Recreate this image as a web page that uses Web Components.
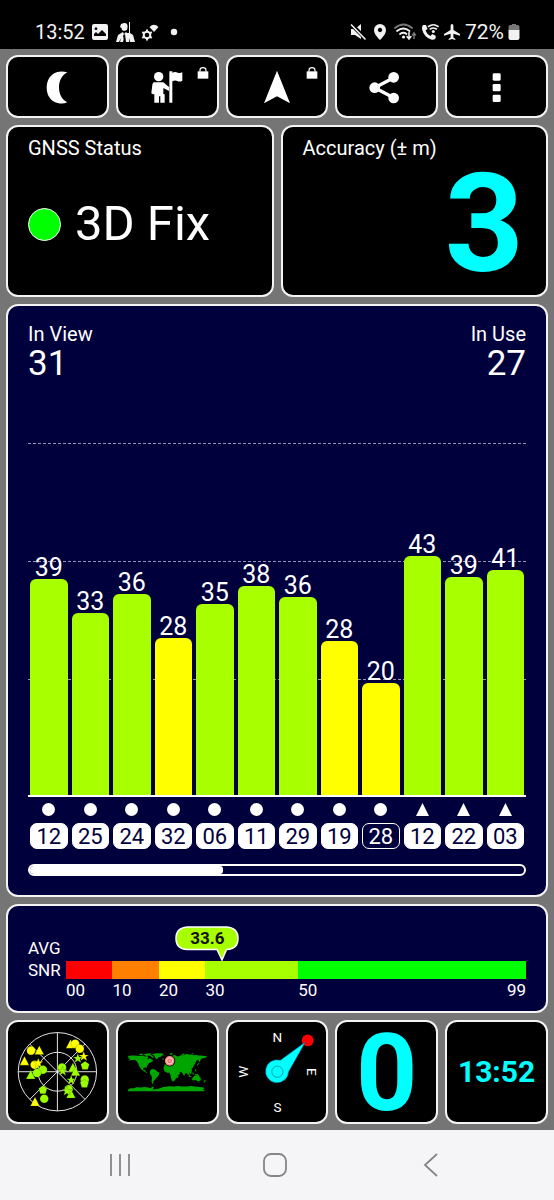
<!DOCTYPE html>
<html lang="en">
<head>
<meta charset="utf-8">
<meta name="viewport" content="width=device-width, initial-scale=1">
<title>GNSS Status</title>
<style>
  body { margin: 0; font-family: Roboto, "Liberation Sans", sans-serif; color: #fff; background: #757575; }
</style>
</head>
<body>
<gnss-app></gnss-app>

<script>
function define(name, html, setup) {
  const template = document.createElement('template');
  template.innerHTML = html;
  customElements.define(name, class extends HTMLElement {
    constructor() {
      super();
      this.attachShadow({ mode: 'open' }).append(template.content.cloneNode(true));
    }
    connectedCallback() {
      if (setup) setup(this, this.shadowRoot);
    }
  });
}

/* System status bar */
define('status-bar', `
<style>
  :host { display: flex; justify-content: space-between; align-items: center; box-sizing: border-box;
    height: 49px; padding: 14px 34px 0 35px; background: #000; color: #f2f2f2; font-size: 20px; line-height: 24px; }
  div { display: flex; align-items: center; }
  svg { display: block; fill: #f2f2f2; }
  .left { gap: 6px; }
  .right { gap: 4px; font-size: 21px; }
</style>
<div class="left">
  <span>13:52</span>
  <svg width="18" height="18" viewBox="0 0 18 18"><path fill-rule="evenodd" d="M3 1h12a2 2 0 0 1 2 2v12a2 2 0 0 1-2 2H3a2 2 0 0 1-2-2V3a2 2 0 0 1 2-2zm0 12h12v-2l-4-4-4 4-2-2-2 2zM5 4.300a1.400 1.400 0 1 0 .01 0z"/></svg>
  <svg width="20" height="20" viewBox="0 0 20 20"><path d="M9 1c3 0 4 2 3.500 4.500L12 8l-3 1-2-1-.5-2L5 5l1-3zM14 0h1v11h-1zM1 20l2-7 5-3 1 2 2-2 1 1h3l3 2 2 7h-5l-1-4v4h-3l-1-8-2 8H5l1-4-2 4z"/><path fill="#000" d="M9 12l1 1-1 5-1-4z"/></svg>
  <svg width="18" height="18" viewBox="0 0 18 18"><path d="M8.500 4Q13-.5 17.500 4L13 9z"/><circle cx="6" cy="12" r="3.300" fill="none" stroke="#f2f2f2" stroke-width="2"/><path fill="none" stroke="#f2f2f2" stroke-width="2" d="M6 6.500v2M6 15.500v2M1.200 9.200l1.800 1M9 13.800l1.800 1M1.200 14.800l1.800-1M9 10.200l1.800-1"/></svg>
  <svg width="16" height="16" viewBox="0 0 16 16"><circle cx="9" cy="8" r="3.200"/></svg>
</div>
<div class="right">
  <svg width="18" height="18" viewBox="0 0 18 18"><path d="M2 6h4l6-5v15l-6-4H2z"/><path stroke="#000" stroke-width="4" d="M2 1l15 15"/><path stroke="#f2f2f2" stroke-width="1.600" d="M2 1.500l14.500 15"/></svg>
  <svg width="18" height="18" viewBox="0 0 18 18"><path fill-rule="evenodd" d="M9 1a6 6 0 0 1 6 6c0 4-4 8-6 10-2-2-6-6-6-10a6 6 0 0 1 6-6zm0 3.800a2.200 2.200 0 1 0 .01 0z"/></svg>
  <svg width="24" height="18" viewBox="0 0 24 18"><g fill="none" stroke-width="1.800" stroke-linecap="round"><path stroke="#777" d="M2 5q8.500-7 17 0"/><path stroke="#f2f2f2" d="M4 8q6.500-5 12.500 0M7 11q3.500-2.500 6.500 0"/><path stroke="#f2f2f2" stroke-width="1.500" d="M16 9.500v6M14 13.500l2 2.500 2-2.500"/><path stroke="#777" stroke-width="1.500" d="M21 15.500v-5M19.500 12l1.500-2 1.500 2"/></g><circle cx="10.500" cy="14" r="1.600"/></svg>
  <svg width="18" height="18" viewBox="0 0 18 18"><path d="M2 2l3 0 1.500 4-2 1.500q1.500 4 5 5.500l1.700-2 3.500 1.700v2.500q-1.500 2-4 1.600Q3 14.500 1 6q-.2-2.700 1-4z"/><path fill="none" stroke="#f2f2f2" stroke-width="1.600" stroke-linecap="round" d="M7.500 3.500q5-3.500 9.500 0M9.300 6q3-2 6 0"/><circle cx="12.300" cy="8.500" r="1.500"/></svg>
  <svg width="18" height="18" viewBox="0 0 18 18"><path d="M9 1q1.400 0 1.400 2v4l6.600 4v1.800l-6.600-2v3.700l2 1.500V17L9 16l-3.400 1v-1l2-1.500v-3.700l-6.600 2V11l6.600-4V3Q7.600 1 9 1z"/></svg>
  <span>72%</span>
  <svg width="12" height="18" viewBox="0 0 12 18"><path fill="#777" d="M4 1h4v1h2a2 2 0 0 1 1.500 2v3H.5V4A2 2 0 0 1 2 2h2z"/><path d="M.5 7h11v8a2 2 0 0 1-2 2h-7a2 2 0 0 1-2-2z"/></svg>
</div>`);

/* Toolbar button; the "locked" attribute adds the padlock badge */
define('tool-button', `
<style>
  :host { display: block; position: relative; }
  button { display: flex; align-items: center; justify-content: center; width: 100%; height: 63px; margin: 0; padding: 0;
    border: 2px solid #f4f4f4; border-radius: 12px; background: #000; color: #fff; }
  .lock { display: none; position: absolute; top: 12px; right: 10px; fill: #fff; }
  :host([locked]) .lock { display: block; }
  ::slotted(svg) { display: block; fill: #fff; }
</style>
<button type="button"><slot></slot></button>
<svg class="lock" width="12" height="12" viewBox="0 0 36 36"><path d="M2 13h32v22H2z"/><path fill="none" stroke="#fff" stroke-width="3.500" d="M9 14V9q0-7 9-7t9 7v5"/></svg>`,
(host, root) => root.querySelector('button').setAttribute('aria-label', host.getAttribute('label')));

/* Bordered panel */
define('panel-card', `
<style>
  :host { display: block; box-sizing: border-box; min-width: 0; border: 2px solid #f4f4f4; border-radius: 12px;
    background: var(--panel, #000); }
</style>
<slot></slot>`);

/* One signal bar with its value above */
define('sat-bar', `
<style>
  :host { display: flex; flex-direction: column; justify-content: flex-end; align-items: stretch; }
  span { font-size: 25px; line-height: 22px; text-align: center; }
  div { flex: none; border-radius: 6px 6px 0 0; background: #a8ff00; }
  :host([weak]) div { background: #ff0; }
</style>
<span><slot></slot></span><div></div>`,
(host, root) => root.querySelector('div').style.height = host.getAttribute('level') + '%');

/* Constellation symbol and satellite number */
define('sat-tag', `
<style>
  :host { display: flex; flex-direction: column; align-items: center; gap: 7px; }
  svg { display: block; fill: #fff; }
  polygon { display: none; }
  :host([glonass]) polygon { display: block; }
  :host([glonass]) circle { display: none; }
  span { box-sizing: border-box; width: 100%; height: 26px; border: 1px solid #fff; border-radius: 7px; background: #fff;
    color: #00003c; font-size: 22px; line-height: 26px; text-align: center; }
  :host([unused]) span { background: #00003c; color: #fff; }
</style>
<svg width="13" height="13" viewBox="0 0 13 13"><circle cx="6.500" cy="6.500" r="6.500"/><polygon points="6.500,0 13,13 0,13"/></svg>
<span><slot></slot></span>`);

define('signal-chart', `
<style>
  :host { display: flex; flex-direction: column; flex: 1; box-sizing: border-box; padding: 16px 20px 19px; }
  .counts { display: flex; justify-content: space-between; font-size: 20px; line-height: 24px; }
  .counts b { display: block; font-weight: 400; font-size: 35px; line-height: 36px; }
  .counts > :last-child { text-align: right; }
  .plot { position: relative; flex: 1; display: grid; min-height: 200px; margin-top: 61px; }
  .lines { position: absolute; inset: 0; display: grid; grid-template-rows: repeat(3, 1fr); }
  .lines i { border-top: 1px dashed #9494b0; }
  .bars, .tags { display: grid; grid-template-columns: repeat(12, 1fr); gap: 4px; padding: 0 2px; }
  .bars { position: relative; border-bottom: 2px solid #fff; margin: 0; }
  .tags { margin-top: 6px; }
  .scroll { box-sizing: border-box; height: 12px; margin-top: 15px; border: 2px solid #fff; border-radius: 6px; overflow: hidden; }
  .scroll div { width: 39%; height: 100%; border-radius: 0 3px 3px 0; background: #fff; }
</style>
<div class="counts"><div>In View<b>31</b></div><div>In Use<b>27</b></div></div>
<div class="plot">
  <div class="lines"><i></i><i></i><i></i></div>
  <div class="bars">
    <sat-bar level="61.5">39</sat-bar><sat-bar level="51.7">33</sat-bar><sat-bar level="57">36</sat-bar>
    <sat-bar level="44.7" weak>28</sat-bar><sat-bar level="54.4">35</sat-bar><sat-bar level="59.3">38</sat-bar>
    <sat-bar level="56.3">36</sat-bar><sat-bar level="43.7" weak>28</sat-bar><sat-bar level="31.8" weak>20</sat-bar>
    <sat-bar level="68">43</sat-bar><sat-bar level="61.9">39</sat-bar><sat-bar level="63.8">41</sat-bar>
  </div>
</div>
<div class="tags">
  <sat-tag>12</sat-tag><sat-tag>25</sat-tag><sat-tag>24</sat-tag><sat-tag>32</sat-tag><sat-tag>06</sat-tag><sat-tag>11</sat-tag>
  <sat-tag>29</sat-tag><sat-tag>19</sat-tag><sat-tag unused>28</sat-tag><sat-tag glonass>12</sat-tag><sat-tag glonass>22</sat-tag><sat-tag glonass>03</sat-tag>
</div>
<div class="scroll" aria-hidden="true"><div></div></div>`);

define('snr-meter', `
<style>
  :host { display: grid; grid-template-columns: 38px 1fr; padding: 20px 20px 10px; font-size: 17px; line-height: 22px; }
  .name { align-self: end; margin-bottom: 20px; }
  .scale { position: relative; padding-top: 35px; }
  .colors, .ticks { display: grid; grid-template-columns: 10fr 10fr 10fr 20fr 49fr; }
  .colors { height: 18px; }
  .colors i:nth-child(1) { background: #f00; }
  .colors i:nth-child(2) { background: #ff8000; }
  .colors i:nth-child(3) { background: #ff0; }
  .colors i:nth-child(4) { background: #a8ff00; }
  .colors i:nth-child(5) { background: #0f0; }
  .ticks > :last-child { display: flex; justify-content: space-between; }
  .marker { position: absolute; top: 0; left: 34%; width: 64px; height: 36px; margin-left: -47px; }
  .marker svg { position: absolute; inset: 0; }
  .marker b { position: relative; display: block; line-height: 24px; text-align: center; color: #111; font-size: 17px; }
</style>
<div class="name">AVG<br>SNR</div>
<div class="scale">
  <div class="colors"><i></i><i></i><i></i><i></i><i></i></div>
  <div class="ticks"><span>00</span><span>10</span><span>20</span><span>30</span><span><span>50</span><span>99</span></span></div>
  <div class="marker">
    <svg width="64" height="36" viewBox="0 0 64 36"><path fill="#a8ff00" stroke="#fff" stroke-width="1.500" d="M12 1h40q11 1 11 11.500t-11 11h-.5l-4.500 10.500-5-10.500H12Q1 23 1 12.500T12 1z"/></svg>
    <b>33.6</b>
  </div>
</div>`);

/* Polar view of the satellites */
define('sky-plot', `
<style>
  :host { display: block; }
  svg { display: block; width: 100%; }
</style>
<svg viewBox="24 36 300 302" role="img" aria-label="Sky view">
  <defs>
    <circle id="c" r="13"/><path id="t" d="M0-15l14 27h-28z"/><path id="p" d="M0-13l13 9-5 16H-8l-5-16z"/>
    <path id="s" d="M0-15l4 11h11l-9 6 4 12-10-7-10 7 4-12-9-6h11z"/>
  </defs>
  <g fill="none" stroke="#e8e8e8" stroke-width="3"><circle cx="174" cy="187" r="119"/><circle cx="174" cy="187" r="59"/>
    <path d="M174 68v238M55 187h238M90 103l168 168M90 271l168-168"/></g>
  <g id="sats" stroke="#000" stroke-opacity=".35" stroke-width="1.500"></g>
</svg>`,
(host, root) => {
  const sats = [
    't 74 155', 'c 94 123', 't 119 123', 't 214 104', 'c 228 102', 'c 242 117', 's 254 140', 'c 105 166', 's 116 160', 't 106 279',
    'c 130 181 g', 'c 112 191 g', 't 93 197 g', 'p 130 242 g', 'c 134 269 g', 'c 188 174 g', 's 190 185 g', 's 236 146 g',
    'p 258 168 g', 't 221 175 g', 't 229 187 g', 's 216 212 g', 'c 257 211 g', 'p 256 223 g', 't 215 255 g', 'c 208 240 g', 's 203 245 g'
  ];
  const layer = root.getElementById('sats');
  layer.innerHTML = sats.map(s => {
    const [shape, x, y, green] = s.split(' ');
    return `<use href="#${shape}" x="${x}" y="${y}" fill="${green ? '#9cff00' : '#ff0'}"/>`;
  }).join('');
});

define('world-map', `
<style>
  :host { display: block; }
  svg { display: block; width: 100%; }
</style>
<svg viewBox="353 36 300 302" role="img" aria-label="World map">
  <g fill="#00a500">
    <path d="M383 140l10-2 12 0 12 1 12-1 6 3 7-1 4 3-4 4 2 3 6-5 5 4 5 5-7 4-6 3-3 5-4 6 0 4-5-2-6 2 1 5 5 1 3 5 5 2-4 1-8-5-7-5-6-9-4-9-4-7-8-4-10 1-8 2 6-5-5-3z"/>
    <path d="M430 135l10-3 14-1-3 4 8 5 4 5-6-1-8-6-10 1z"/>
    <path d="M456 134l12-3 16 0 9 2-5 4-4 4-8 3-5 5-5-3-2-7-5-3z"/>
    <path d="M452 181l7-2 8 2 5 5 7 4-2 7-4 5-4 5-5 5-3 4-1 7-4 0-1-8 1-9-1-6-5-7 0-7z"/>
    <path d="M487 148l5-1 1 3-5 1zM497 151l3 0 2 7-4 1z"/>
    <path d="M494 167l2-5 5-2 5-4 5-2 2-5-1-5 5-5 6-3 6 2 4 3 6-1 4-3 8 0 9-4 8 2 8 0 7 2 8-1 7 2 8 0 8 1 7 0 0 3-7 3-5 1-5 4-2 7-3 0-2-6-6 2-2 5-2 5-4 6-3 6-4 3 2 6-4 5-5 1 1 6 3 7-4-3-4-9-4-1-5 3-2 8-4-7-3-5-8-2-1 2 5 2-3 4-6 3-3-3-5-9-2-6-8-1-1-3-5-1-3-4-2 4-4-3-3 2-4 4z"/>
    <path d="M492 172l9-4 9 1 8 3 9 0 4 8 5 5 5 0-2 5-6 7 0 7-5 4-3 6-4 3-4-2-4-12-1-7-3-6-8 0-7-5-3-7z"/>
    <path d="M534 198l3-3-1 8-3 4-2-4zM559 187l5 3 5 7-2 1-5-5zM571 188l5-2 1 6-4 3zM567 200l9 1-1 2-8-1zM579 190l4 0-1 6-3-1zM586 193l9 2 5 5-7-1-6-3zM588 178l3 4-1 5-3-4zM598 159l2 3-5 6-3 0z"/>
    <path d="M579 205l6-5 6-3 3 3 4-3 3 6 4 6-2 5-5 3-5-2-5-3-6 2-4-2zM597 219l3 0-1 3zM617 211l3 3-5 6-3-1z"/>
    <path d="M383 242l8-5 10 0 8-3 14 1 11-2 11 2 6 2 8-5 3 4-4 4 10 0 12-3 11-4 16-2 16 1 13-2 12 2 14 0 12-2 13 2 15 1 11 2 3 2-6 5 5 1v3H383z"/>
    <path d="M509 132l9-2 2 3-8 3zM546 134l9-3-1 3-6 4zM575 131l9 1-3 3zM614 140l8 0 0 3-6 1zM416 134l10-2 4 3-10 2z"/>
  </g>
  <circle cx="510" cy="154" r="17" fill="#000"/><circle cx="510" cy="154" r="14.500" fill="#f88"/>
  <circle cx="510" cy="154" r="9" fill="#f66" stroke="#fdd" stroke-width="3"/><circle cx="510" cy="154" r="3" fill="#fcc"/>
</svg>`);

define('compass-dial', `
<style>
  :host { display: block; }
  svg { display: block; width: 100%; }
  text { font-size: 41px; fill: #fff; text-anchor: middle; }
</style>
<svg viewBox="21 36 300 302" role="img" aria-label="Compass">
  <text x="171" y="96">N</text><text x="171" y="308">S</text>
  <text transform="translate(261 187) rotate(90)">E</text><text transform="translate(81 187) rotate(-90)">W</text>
  <circle cx="263" cy="92" r="18" fill="#f00"/>
  <path fill="#0ff" stroke="#058" stroke-width="1.500" d="M256 97l-76 55a35 35 0 1 0 25 35z"/>
  <circle cx="171" cy="187" r="17" fill="#0ff" stroke="#079aa8" stroke-width="3"/>
</svg>`);

define('nav-bar', `
<style>
  :host { display: block; background: #f5f5f7; }
  nav { display: flex; justify-content: space-between; height: 70px; padding: 0 101px 0 97px; }
  button { width: 46px; padding: 0; border: 0; background: none; display: grid; place-items: center; }
  svg { display: block; fill: none; stroke: #858587; stroke-width: 1.800; }
</style>
<nav>
  <button type="button" aria-label="Recents"><svg width="24" height="24" viewBox="0 0 24 24"><path d="M3 1v22M12 1v22M21 1v22"/></svg></button>
  <button type="button" aria-label="Home"><svg width="24" height="24" viewBox="0 0 24 24"><rect x="1" y="1" width="22" height="22" rx="7"/></svg></button>
  <button type="button" aria-label="Back"><svg width="24" height="24" viewBox="0 0 24 24"><path d="M19 1L7 12l12 11"/></svg></button>
</nav>`);

define('gnss-app', `
<style>
  :host { display: flex; flex-direction: column; min-height: 100vh; }
  main { flex: 1; display: flex; flex-direction: column; gap: 7px; padding: 6px; }
  .five { display: grid; grid-template-columns: repeat(5, 1fr); gap: 7px; }
  .two { display: grid; grid-template-columns: 1fr 1fr; gap: 7px; }
  .two panel-card { height: 172px; padding: 9px 20px 0; }
  h2 { margin: 0; font-weight: 400; font-size: 20px; line-height: 24px; }
  .fix { display: flex; align-items: center; gap: 14px; margin-top: 36px; font-size: 49px; line-height: 56px; }
  .fix i { box-sizing: border-box; width: 33px; height: 33px; border: 1px solid #fff; border-radius: 50%; background: #0f0; }
  .accuracy { padding-right: 2px; font-size: 138px; line-height: 128px; font-weight: 700; color: #0ff; text-align: right; }
  .chart { flex: 1; display: flex; flex-direction: column; --panel: #00003c; }
  .snr { --panel: #00003c; }
  .tiles panel-card { display: grid; align-items: center; height: 104px; text-align: center; font-weight: 700; color: #0ff; }
  .tiles compass-dial { font-weight: 400; }
  .speed { padding-top: 4px; font-size: 107px; line-height: 96px; }
  .clock { font-size: 30px; line-height: 36px; }
</style>
<status-bar></status-bar>
<main>
  <div class="five">
    <tool-button label="Night mode"><svg width="40" height="40" viewBox="111 200 120 120"><path d="M202 216Q186 211 172 215C151 221 140 240 140 262S152 303 173 308Q188 312 202 306C185 298 177 281 177 261S186 224 202 216z"/></svg></tool-button>
    <tool-button label="Guide" locked><svg width="40" height="40" viewBox="443 200 120 120"><circle cx="478" cy="229" r="14"/><path d="M465 246h25q5 0 8 5l11 9v12l-17-9v18l4 1v25h-13v-19h-4v19h-14v-25h-4l-5-3 3-26q1-7 6-7zM510 213h9v4q9-4 16 0 7 3 14-1v25q-8 5-15 1-8-3-15 1v64h-9z"/></svg></tool-button>
    <tool-button label="Navigate" locked><svg width="40" height="40" viewBox="-60 200 120 120"><path d="M0 211l39 98-39-21-39 21z"/></svg></tool-button>
    <tool-button label="Share"><svg width="40" height="40" viewBox="269 200 120 120"><path fill="none" stroke="#fff" stroke-width="10" d="M349 232l-57 30 57 30"/><circle cx="349" cy="231" r="16"/><circle cx="292" cy="262" r="16"/><circle cx="349" cy="293" r="16"/></svg></tool-button>
    <tool-button label="Menu"><svg width="40" height="40" viewBox="598 200 120 120"><rect x="645" y="219" width="24" height="22" rx="4"/><rect x="645" y="251" width="24" height="22" rx="4"/><rect x="645" y="283" width="24" height="22" rx="4"/></svg></tool-button>
  </div>
  <div class="two">
    <panel-card><h2>GNSS Status</h2><div class="fix"><i></i><span>3D Fix</span></div></panel-card>
    <panel-card><h2>Accuracy (± m)</h2><div class="accuracy">3</div></panel-card>
  </div>
  <panel-card class="chart"><signal-chart></signal-chart></panel-card>
  <panel-card class="snr"><snr-meter></snr-meter></panel-card>
  <div class="five tiles">
    <panel-card><sky-plot></sky-plot></panel-card>
    <panel-card><world-map></world-map></panel-card>
    <panel-card><compass-dial></compass-dial></panel-card>
    <panel-card><div class="speed">0</div></panel-card>
    <panel-card><div class="clock">13:52</div></panel-card>
  </div>
</main>
<nav-bar></nav-bar>`);
</script>
</body>
</html>
